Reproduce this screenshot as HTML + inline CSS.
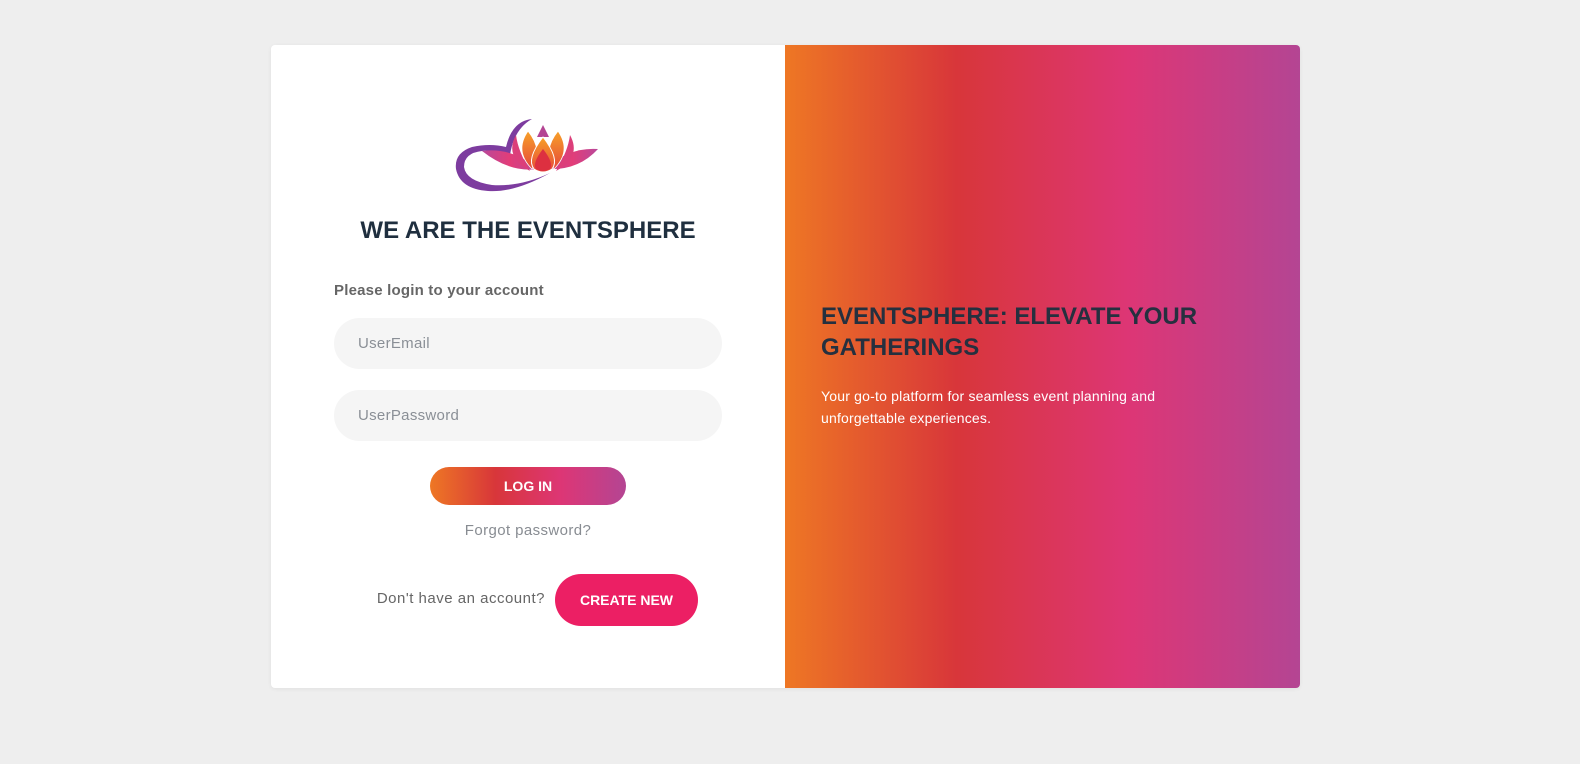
<!DOCTYPE html>
<html><head><style>
body{margin:0;background:#eeeeee;font-family:"Liberation Sans",sans-serif;width:1580px;height:764px;position:relative;overflow:hidden}
.card{position:absolute;left:271px;top:45px;width:1029px;height:643px;background:#fff;border-radius:4px;overflow:hidden;box-shadow:0 1px 4px rgba(0,0,0,.06)}
.right{position:absolute;left:514px;top:0;width:515px;height:643px;background:linear-gradient(to right,#ee7724,#d8363a,#dd3675,#b44593)}
.abs{position:absolute}
h1{position:absolute;margin:0;left:0;width:514px;top:172px;text-align:center;font-size:24px;font-weight:bold;color:#1f2f3f}
.inp{position:absolute;left:63px;width:388px;height:51px;border-radius:26px;background:#f5f5f5;color:#8a8f96;font-size:15px;line-height:51px;text-indent:24px;letter-spacing:.3px}
</style></head><body>
<div class="card">
<svg class="abs" style="left:183px;top:72px" width="150" height="78" viewBox="0 0 150 78">
<defs><linearGradient id="f" x1="0" y1="0" x2="0" y2="1"><stop offset="0" stop-color="#f7a128"/><stop offset="1" stop-color="#e6483a"/></linearGradient>
<linearGradient id="p" x1="0" y1="0" x2="1" y2="0"><stop offset="0" stop-color="#b9489a"/><stop offset=".5" stop-color="#e33d78"/><stop offset="1" stop-color="#b9489a"/></linearGradient></defs>
<path d="M78 2 Q58 4 52 30 Q36 26 18 30 Q0 36 2 52 Q6 72 34 74 Q60 76 96 56 Q66 70 38 68 Q12 64 10 50 Q10 36 28 34 Q44 32 56 38 Q60 12 78 2Z" fill="#7d3c9f"/>
<path d="M28 34 Q58 30 84 52 Q56 56 28 34Z" fill="url(#p)"/>
<path d="M144 32 Q114 30 92 52 Q124 54 144 32Z" fill="url(#p)"/>
<path d="M62 18 Q50 40 76 54 Q64 34 62 18Z" fill="#dc3f7a"/>
<path d="M116 18 Q128 40 102 54 Q114 34 116 18Z" fill="#dc3f7a"/>
<path d="M89 8 L95 20 L83 20Z" fill="#b44593"/>
<path d="M74 14 Q60 34 78 52 Q90 34 74 14Z" fill="url(#f)" stroke="#fff" stroke-width=".8"/>
<path d="M104 14 Q118 34 100 52 Q88 34 104 14Z" fill="url(#f)" stroke="#fff" stroke-width=".8"/>
<path d="M89 20 Q72 42 80 52 Q89 58 98 52 Q106 42 89 20Z" fill="url(#f)" stroke="#fff" stroke-width="1"/>
<path d="M89 32 Q78 46 82 52 Q89 56 96 52 Q100 46 89 32Z" fill="#dd3040"/>
</svg>
<h1>WE ARE THE EVENTSPHERE</h1>
<div class="abs" style="left:63px;top:237px;font-size:15px;font-weight:bold;color:#666;letter-spacing:.2px">Please login to your account</div>
<div class="inp" style="top:273px">UserEmail</div>
<div class="inp" style="top:345px">UserPassword</div>
<div class="abs" style="left:159px;top:422px;width:196px;height:38px;border-radius:19px;background:linear-gradient(to right,#ee7724,#d8363a,#dd3675,#b44593);color:#fff;font-size:14px;font-weight:bold;text-align:center;line-height:38px">LOG IN</div>
<div class="abs" style="left:0;width:514px;top:477px;text-align:center;color:#888c92;font-size:15px;letter-spacing:.4px">Forgot password?</div>
<div class="abs" style="left:0;width:274px;text-align:right;top:545px;color:#666;font-size:15px;letter-spacing:.5px">Don't have an account?</div>
<div class="abs" style="left:284px;top:529px;width:143px;height:52px;border-radius:26px;background:#ec1f64;color:#fff;font-size:14px;font-weight:bold;text-align:center;line-height:52px">CREATE NEW</div>
<div class="right">
<div class="abs" style="left:36px;top:256px;font-size:24px;font-weight:bold;color:#25303f;line-height:31px;width:420px">EVENTSPHERE: ELEVATE YOUR GATHERINGS</div>
<div class="abs" style="left:36px;top:340px;font-size:14px;color:#fff;line-height:22px;width:400px;letter-spacing:.2px">Your go-to platform for seamless event planning and unforgettable experiences.</div>
</div>
</div>
</body></html>
